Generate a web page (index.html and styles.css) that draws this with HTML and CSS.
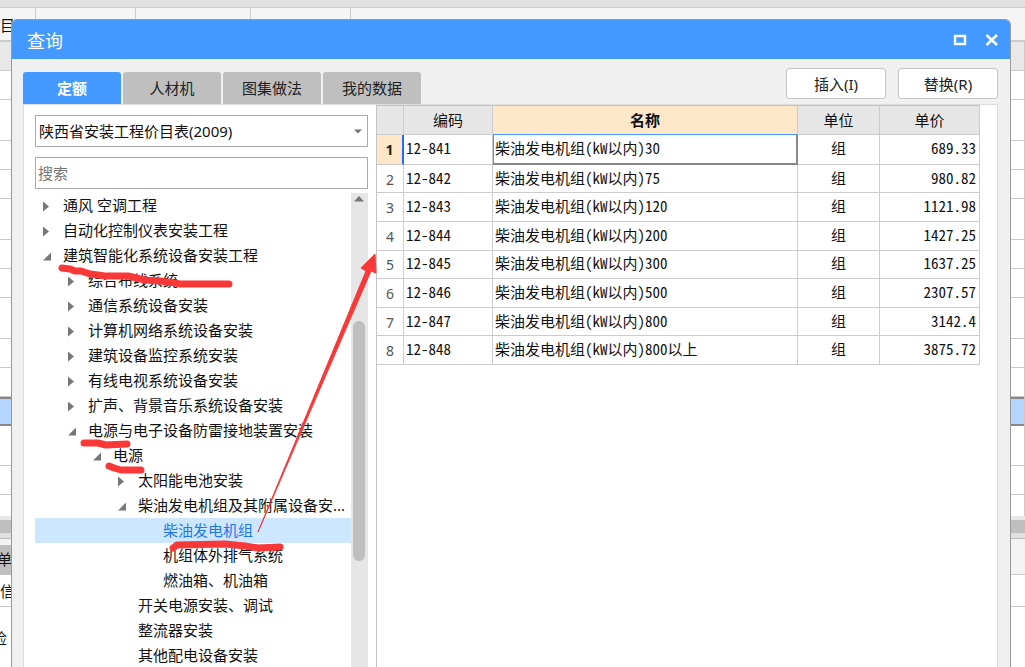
FILE: index.html
```html
<!DOCTYPE html>
<html lang="zh-CN">
<head>
<meta charset="utf-8">
<title>查询</title>
<link rel="stylesheet" href="styles.css">
</head>
<body>
<div class="app" aria-hidden="true">
  <div class="app-strip"></div>
  <div class="app-tabs">
    <span class="app-tab first">目</span><span class="app-tab t2">其他项目</span><span class="app-tab t3">人材机汇总</span><span class="app-tab t2">费用汇总</span>
  </div>
  <div class="app-sheet">
    <div class="app-head"></div>
    <div class="r"></div><div class="r tall"></div><div class="r"></div><div class="r"></div><div class="r tall"></div>
    <div class="r"></div><div class="r"></div><div class="r tall"></div><div class="r"></div><div class="r"></div>
    <div class="r chosen"></div><div class="r mid"></div><div class="r"></div><div class="r last"></div>
  </div>
  <div class="app-scroll"></div>
  <div class="app-detail-tabs"><span>单</span></div>
  <div class="app-detail">信</div>
  <div class="app-detail-text">检</div>
</div>

<section class="dialog" role="dialog" aria-labelledby="dlg-title">
  <header class="titlebar">
    <h1 id="dlg-title">查询</h1>
    <button class="win-btn" aria-label="最大化"><svg width="14" height="12" viewBox="0 0 14 12"><rect x="2" y="2" width="10" height="8" fill="none" stroke="#fff" stroke-width="2.4"/></svg></button>
    <button class="win-btn" aria-label="关闭"><svg width="14" height="12" viewBox="0 0 14 12"><path d="M1.5 1L12 11M12 1L1.5 11" stroke="#fff" stroke-width="2.5"/></svg></button>
  </header>
  <div class="toolbar">
    <nav class="tabs" role="tablist">
      <button class="tab active" role="tab" aria-selected="true">定额</button>
      <button class="tab" role="tab">人材机</button>
      <button class="tab" role="tab">图集做法</button>
      <button class="tab" role="tab">我的数据</button>
    </nav>
    <div class="actions">
      <button class="action">插入(I)</button>
      <button class="action">替换(R)</button>
    </div>
  </div>
  <div class="pane">
    <aside class="side">
      <div class="combo">
        <select aria-label="定额库"><option>陕西省安装工程价目表(2009)</option></select>
        <svg class="caret" width="8" height="5" viewBox="0 0 8 5"><path d="M0 .5H8L4 4.5Z" fill="#777"/></svg>
      </div>
      <input class="search" type="text" placeholder="搜索" aria-label="搜索">
      <div class="tree-box">
        <ul class="tree" role="tree">
          <li class="l0"><button class="tg" aria-label="展开"></button><span>通风 空调工程</span></li>
          <li class="l0"><button class="tg" aria-label="展开"></button><span>自动化控制仪表安装工程</span></li>
          <li class="l0"><button class="tg open" aria-label="收起"></button><span>建筑智能化系统设备安装工程</span></li>
          <li class="l1"><button class="tg" aria-label="展开"></button><span>综合布线系统</span></li>
          <li class="l1"><button class="tg" aria-label="展开"></button><span>通信系统设备安装</span></li>
          <li class="l1"><button class="tg" aria-label="展开"></button><span>计算机网络系统设备安装</span></li>
          <li class="l1"><button class="tg" aria-label="展开"></button><span>建筑设备监控系统安装</span></li>
          <li class="l1"><button class="tg" aria-label="展开"></button><span>有线电视系统设备安装</span></li>
          <li class="l1"><button class="tg" aria-label="展开"></button><span>扩声、背景音乐系统设备安装</span></li>
          <li class="l1"><button class="tg open" aria-label="收起"></button><span>电源与电子设备防雷接地装置安装</span></li>
          <li class="l2"><button class="tg open" aria-label="收起"></button><span>电源</span></li>
          <li class="l3"><button class="tg" aria-label="展开"></button><span>太阳能电池安装</span></li>
          <li class="l3"><button class="tg open" aria-label="收起"></button><span>柴油发电机组及其附属设备安...</span></li>
          <li class="l4 sel"><span>柴油发电机组</span></li>
          <li class="l4"><span>机组体外排气系统</span></li>
          <li class="l4"><span>燃油箱、机油箱</span></li>
          <li class="l3 leaf"><span>开关电源安装、调试</span></li>
          <li class="l3 leaf"><span>整流器安装</span></li>
          <li class="l3 leaf"><span>其他配电设备安装</span></li>
        </ul>
        <div class="scrollbar">
          <svg width="10" height="6" viewBox="0 0 10 6"><path d="M0 5.5L5 0L10 5.5Z" fill="#777"/></svg>
          <div class="thumb"></div>
        </div>
      </div>
    </aside>
    <div class="main">
      <table class="grid">
        <colgroup><col class="c-no"><col class="c-code"><col class="c-name"><col class="c-unit"><col class="c-price"></colgroup>
        <thead><tr><th></th><th>编码</th><th class="cur">名称</th><th>单位</th><th>单价</th></tr></thead>
        <tbody>
          <tr class="cur-row"><th>1</th><td>12-841</td><td>柴油发电机组(kW以内)30</td><td>组</td><td>689.33</td></tr>
          <tr><th>2</th><td>12-842</td><td>柴油发电机组(kW以内)75</td><td>组</td><td>980.82</td></tr>
          <tr><th>3</th><td>12-843</td><td>柴油发电机组(kW以内)120</td><td>组</td><td>1121.98</td></tr>
          <tr><th>4</th><td>12-844</td><td>柴油发电机组(kW以内)200</td><td>组</td><td>1427.25</td></tr>
          <tr><th>5</th><td>12-845</td><td>柴油发电机组(kW以内)300</td><td>组</td><td>1637.25</td></tr>
          <tr><th>6</th><td>12-846</td><td>柴油发电机组(kW以内)500</td><td>组</td><td>2307.57</td></tr>
          <tr><th>7</th><td>12-847</td><td>柴油发电机组(kW以内)800</td><td>组</td><td>3142.4</td></tr>
          <tr><th>8</th><td>12-848</td><td>柴油发电机组(kW以内)800以上</td><td>组</td><td>3875.72</td></tr>
        </tbody>
      </table>
    </div>
  </div>
</section>

<svg class="marks" width="1025" height="667" viewBox="0 0 1025 667" aria-hidden="true">
  <g fill="none" stroke="#fb3838" stroke-width="7" stroke-linecap="round" stroke-linejoin="round">
    <path d="M62 268L70 269L75 271L81 271L90 274L105 276L128 276L145 280L160 281L175 283L180 284L229 284"/>
    <path d="M84 443L98 443L106 445L127 444"/>
    <path d="M109 466L114 468L121 470L141 470"/>
    <path d="M173 548L177 545L225 544L245 546L258 548L280 547"/>
  </g>
  <path d="M258 532L366 271L361 268L375 254L376 273L371 271Z" fill="#fb3838" stroke="#fb3838" stroke-width="1" stroke-linejoin="round"/>
</svg>
</body>
</html>
```
FILE: styles.css
```css
* { box-sizing: border-box; }
body {
  margin: 0;
  height: 100vh;
  position: relative;
  overflow: hidden;
  font: 15px/20px "Noto Sans", "Noto Sans CJK SC", sans-serif;
  color: #111;
  background: #fff;
}
button, input, select { font: inherit; color: inherit; margin: 0; }

/* application window behind the dialog */
.app-strip { height: 8px; background: #e1e1e1; border-bottom: 1px solid #ccc; }
.app-tabs { display: flex; height: 34px; background: #f5f5f5; border-bottom: 2px solid #ccc; }
.app-tab { border-right: 1px solid #ccc; text-align: center; line-height: 36px; }
.app-tab.first { width: 36px; text-align: left; line-height: 34px; }
.t2 { width: 100px; }
.t3 { width: 115px; }
.app-sheet { border-right: 1px solid #ccc; }
.app-head { height: 29px; background: #e8e8e8; border-bottom: 1px solid #ccc; }
.r { height: 29px; border-bottom: 1px solid #c8c8c8; }
.r.tall { height: 41px; }
.r.mid { height: 40px; }
.r.last { height: 21px; border: 0; }
.r.chosen { background: #b3d5ff; border-top: 2px solid #888; border-bottom: 2px solid #888; }
.app-scroll { height: 22px; background: #bfbfbf; border-top: 4px solid #e8e8e8; border-bottom: 5px solid #e0e0e0; }
.app-detail-tabs { height: 37px; padding-top: 6px; background: #f3f3f3; border-top: 1px solid #bbb; border-bottom: 1px solid #ccc; }
.app-detail-tabs span { display: block; width: 40px; height: 30px; line-height: 28px; text-indent: -3px; background: #bfbfbf; }
.app-detail { height: 32px; line-height: 32px; border-bottom: 1px solid #c8c8c8; }
.app-detail-text { line-height: 62px; text-indent: -8px; }

/* dialog */
.dialog {
  position: absolute;
  top: 19px;
  left: 11px;
  right: 14px;
  bottom: 0;
  display: flex;
  flex-direction: column;
  background: #f0f0f0;
  border: 1px solid #999;
  border-bottom: 0;
  border-radius: 6px 6px 0 0;
  overflow: hidden;
}
.titlebar { display: flex; align-items: center; height: 39px; padding: 0 2px 0 15px; background: #4499ff; color: #fff; }
.titlebar h1 { flex: 1; margin: 0; padding-top: 3px; font-size: 18px; line-height: 24px; font-weight: 400; }
.win-btn { display: flex; justify-content: center; width: 32px; padding: 0; border: 0; background: none; }
.toolbar { display: flex; justify-content: space-between; align-items: flex-end; height: 45px; padding: 0 12px 0 11px; }
.tabs { display: flex; gap: 2px; }
.tab { width: 98px; height: 32px; padding: 0; border: 0; border-radius: 3px 3px 0 0; background: #bfbfbf; color: #222; }
.tab.active { background: #4499ff; color: #fff; font-weight: 700; }
.actions { display: flex; gap: 12px; padding-bottom: 5px; }
.action { width: 100px; height: 31px; padding: 0; border: 1px solid #c4c4c4; border-radius: 3px; background: #fff; color: #222; }
.pane { flex: 1; display: flex; min-height: 0; margin: 0 12px 0 11px; border: 1px solid #ddd; border-bottom: 0; background: #fff; }
.side { display: flex; flex-direction: column; width: 353px; padding: 10px 8px 0 11px; border-right: 1px solid #c4c4c4; }
.combo { position: relative; height: 33px; margin-bottom: 9px; }
.combo select, .search { width: 100%; height: 32px; padding: 0 3px; border: 1px solid #aaa; border-radius: 0; background: #fff; appearance: none; outline: 0; }
.search { padding: 0 2px; }
.caret { position: absolute; right: 6px; top: 14px; }
.search::placeholder { color: #777; opacity: 1; }
.tree-box { flex: 1; display: flex; min-height: 0; margin-top: 4px; }
.tree { flex: 1; margin: 0; padding: 0; list-style: none; overflow: hidden; }
.tree li { display: flex; align-items: center; height: 25px; padding-bottom: 2px; white-space: nowrap; }
.l0 { padding-left: 8px; }
.l1 { padding-left: 33px; }
.l2 { padding-left: 58px; }
.l3 { padding-left: 83px; }
.l3.leaf { padding-left: 103px; }
.l4 { padding-left: 128px; }
.sel { background: #cce7ff; color: #2277ee; }
.tg { width: 20px; height: 14px; padding: 4px 0 0; border: 0; background: none; }
.tg::before { content: ""; display: block; width: 6px; height: 10px; background: #777; clip-path: polygon(0 0, 100% 50%, 0 100%); }
.tg.open::before { width: 8px; height: 8px; clip-path: polygon(100% 0, 100% 100%, 0 100%); }
.scrollbar { width: 17px; padding: 3px 3px 0 2px; background: #e6e6e6; text-align: center; line-height: 6px; }
.scrollbar svg { display: block; margin: 0 auto 119px; }
.thumb { height: 240px; border-radius: 6px; background: #bfbfbf; }

/* result grid */
.main { flex: 1; }
.grid { width: 603px; height: 260px; border-collapse: separate; border-spacing: 0; table-layout: fixed; border-top: 1px solid #c4c4c4; font-family: "Noto Sans Mono CJK SC", "Noto Sans CJK SC", monospace; font-feature-settings: "hwid"; }
.c-no { width: 27px; }
.c-code { width: 89px; }
.c-name { width: 305px; }
.c-unit { width: 82px; }
.c-price { width: 100px; }
.grid th, .grid td { padding: 0 3px; line-height: 20px; border-right: 1px solid #ccc; border-bottom: 1px solid #ccc; white-space: nowrap; }
.grid thead th { height: 29px; background: #e6e6e6; font-weight: 400; }
.grid thead .cur { background: #ffe8ca; font-weight: 700; border-bottom-color: #4499ff; }
.grid tbody th { padding: 2px 0 0; font: 14px/20px "Noto Sans", sans-serif; color: #555; text-align: center; }
.grid tbody .cur-row th { background: #ffe8ca; color: #222; font-weight: 700; border-right: 2px solid #1e6fff; }
.grid td { padding-bottom: 2px; }
.grid td:nth-child(2), .grid td:nth-child(3) { padding-left: 2px; }
.grid .cur-row td:nth-child(3) { border-right: 2px solid #888; border-bottom: 2px solid #888; box-shadow: inset 1px 0 #888; }
.grid td:nth-child(4) { text-align: center; }
.grid td:nth-child(5) { text-align: right; }

/* red pen strokes over the window */
.marks { position: absolute; left: 0; top: 0; pointer-events: none; }
```
